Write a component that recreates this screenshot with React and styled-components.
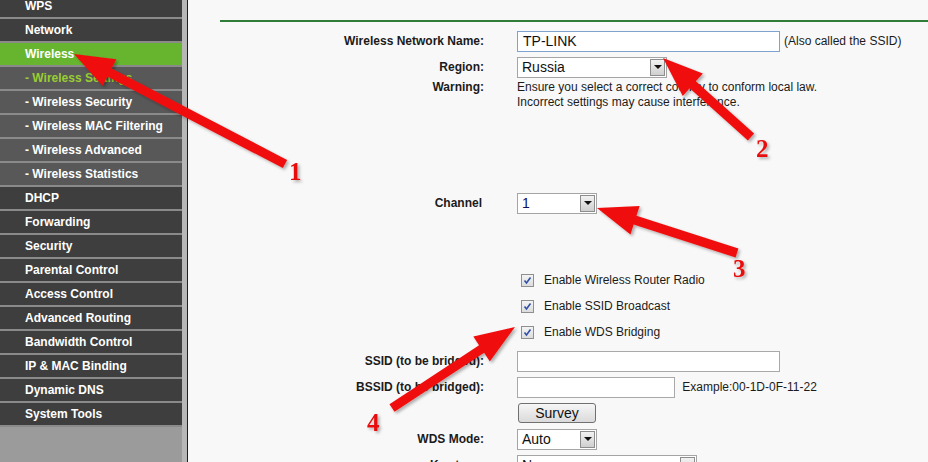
import React from 'react';
import styled, { createGlobalStyle } from 'styled-components';

const GlobalStyle = createGlobalStyle`
  html, body {
    margin: 0;
    padding: 0;
    width: 928px;
    height: 462px;
    overflow: hidden;
    background: #f8f8f8;
    font-family: 'Liberation Sans', Arial, sans-serif;
  }
`;

const Page = styled.div`
  position: relative;
  display: flex;
  width: 928px;
  height: 462px;
  overflow: hidden;
`;

const Sidebar = styled.nav`
  width: 182px;
  flex-shrink: 0;
  background: #9b9b9b;
  border-right: 5px solid #b7b7b7;
  box-shadow: 1px 0 0 #1e1e1e;
  margin-right: 2px;
`;

const NavList = styled.ul`
  list-style: none;
  margin: -5px 0 0;
  padding: 0;
`;

const NavItem = styled.li`
  height: 22px;
  line-height: 22px;
  border-bottom: 2px solid #8a8a8a;
  padding-left: 25px;
  font-size: 12px;
  font-weight: bold;
  color: ${(p) => (p.$current ? '#9acd32' : '#ffffff')};
  background: ${(p) => (p.$active ? '#67b52f' : p.$sub ? '#585858' : '#3e3e3e')};
  white-space: nowrap;
`;

const Content = styled.main`
  flex: 1;
  padding: 20px 0 0 31px;
  background: #f8f8f8;
`;

const Rule = styled.div`
  height: 0;
  border-top: 2px solid #2f7d38;
  margin-bottom: 6px;
`;

const Form = styled.div`
  display: grid;
  grid-template-columns: 264px 1fr;
  column-gap: 33px;
`;

const Label = styled.div`
  height: ${(p) => p.$h || 26}px;
  display: flex;
  align-items: ${(p) => (p.$top ? 'flex-start' : 'center')};
  justify-content: flex-end;
  font-size: 12px;
  font-weight: bold;
  color: #1b1b1b;
  white-space: nowrap;
  padding-right: ${(p) => p.$pr || 0}px;
`;

const Value = styled.div`
  height: ${(p) => p.$h || 26}px;
  display: flex;
  align-items: ${(p) => (p.$top ? 'flex-start' : 'center')};
  gap: 4px;
  font-size: 12px;
  color: #1b1b1b;
  white-space: nowrap;
`;

const Spacer = styled.div`
  grid-column: 1 / span 2;
  height: ${(p) => p.$h}px;
`;

const TextInput = styled.div`
  box-sizing: border-box;
  width: ${(p) => p.$w}px;
  height: 21px;
  background: #ffffff;
  border: 1px solid ${(p) => (p.$focus ? '#7fa3cf' : '#a9a9a9')};
  padding-left: 5px;
  font-size: 14px;
  line-height: 19px;
  color: #111;
`;

const SelectBox = styled.div`
  box-sizing: border-box;
  width: ${(p) => p.$w}px;
  height: 21px;
  display: flex;
  background: #ffffff;
  border: 1px solid #a5a5a5;
  font-size: 14px;
  color: ${(p) => (p.$blue ? '#101060' : '#111')};
`;

const SelectText = styled.span`
  flex: 1;
  padding-left: 4px;
  line-height: 19px;
`;

const SelectArrow = styled.span`
  width: 15px;
  height: 17px;
  margin: 1px;
  box-sizing: border-box;
  border: 1px solid #8d8d8d;
  background: linear-gradient(#f2f2f2, #cfcfcf);
  display: flex;
  align-items: center;
  justify-content: center;
  &::after {
    content: '';
    border-left: 4px solid transparent;
    border-right: 4px solid transparent;
    border-top: 4px solid #111;
  }
`;

const Note = styled.div`
  font-size: 12px;
  line-height: 15px;
  color: #1b1b1b;
`;

const CheckRow = styled.label`
  display: flex;
  align-items: center;
  gap: 10px;
  padding-left: 4px;
  font-size: 12px;
  color: #1b1b1b;
`;

const CheckBox = styled.span`
  box-sizing: border-box;
  width: 13px;
  height: 13px;
  border: 1px solid #8e8f8f;
  background: linear-gradient(#f4f4f4, #dcdcdc);
  display: flex;
  align-items: center;
  justify-content: center;
`;

const Button = styled.button`
  width: 78px;
  height: 20px;
  margin-left: 1px;
  border: 1px solid #707070;
  border-radius: 3px;
  background: linear-gradient(#f6f6f6, #dadada);
  font-family: 'Liberation Sans', Arial, sans-serif;
  font-size: 14px;
  color: #111;
  padding: 0;
`;

const Overlay = styled.svg`
  position: absolute;
  left: 0;
  top: 0;
  width: 928px;
  height: 462px;
  pointer-events: none;
  overflow: visible;
`;

const Num = styled.text`
  font-family: 'Liberation Serif', 'Times New Roman', serif;
  font-weight: bold;
  font-size: 25px;
  fill: #e8100f;
`;

const menu = [
  { t: 'WPS' },
  { t: 'Network' },
  { t: 'Wireless', active: true },
  { t: '- Wireless Settings', sub: true, current: true },
  { t: '- Wireless Security', sub: true },
  { t: '- Wireless MAC Filtering', sub: true },
  { t: '- Wireless Advanced', sub: true },
  { t: '- Wireless Statistics', sub: true },
  { t: 'DHCP' },
  { t: 'Forwarding' },
  { t: 'Security' },
  { t: 'Parental Control' },
  { t: 'Access Control' },
  { t: 'Advanced Routing' },
  { t: 'Bandwidth Control' },
  { t: 'IP & MAC Binding' },
  { t: 'Dynamic DNS' },
  { t: 'System Tools' },
];

const arrows = [
  { tail: [285, 164], tip: [74, 54], n: '1', at: [289, 180] },
  { tail: [751, 137], tip: [663, 58], n: '2', at: [756, 157] },
  { tail: [737, 253], tip: [597, 208], n: '3', at: [733, 277] },
  { tail: [392, 408], tip: [515, 327], n: '4', at: [367, 431] },
];

const arrowPoints = (tail, tip) => {
  const dx = tip[0] - tail[0];
  const dy = tip[1] - tail[1];
  const len = Math.hypot(dx, dy);
  const ux = dx / len;
  const uy = dy / len;
  const nx = -uy;
  const ny = ux;
  const headL = 40;
  const headW = 15;
  const shaftW = 4.6;
  const bx = tip[0] - ux * headL;
  const by = tip[1] - uy * headL;
  const pts = [
    [tail[0] + nx * shaftW, tail[1] + ny * shaftW],
    [bx + nx * shaftW, by + ny * shaftW],
    [bx + nx * headW, by + ny * headW],
    tip,
    [bx - nx * headW, by - ny * headW],
    [bx - nx * shaftW, by - ny * shaftW],
    [tail[0] - nx * shaftW, tail[1] - ny * shaftW],
  ];
  return pts.map((p) => p.join(',')).join(' ');
};

const Check = () => (
  <CheckBox>
    <svg width="9" height="9" viewBox="0 0 9 9">
      <path d="M1.5 4.5 L3.5 7 L7.5 1.5" fill="none" stroke="#2f4fa8" strokeWidth="1.6" />
    </svg>
  </CheckBox>
);

const Select = ({ w, children, blue }) => (
  <SelectBox $w={w} $blue={blue}>
    <SelectText>{children}</SelectText>
    <SelectArrow />
  </SelectBox>
);

const App = () => {
  return (
    <>
      <GlobalStyle />
      <Page>
        <Sidebar>
          <NavList>
            {menu.map((m) => (
              <NavItem key={m.t} $active={m.active} $sub={m.sub} $current={m.current}>
                {m.t}
              </NavItem>
            ))}
          </NavList>
        </Sidebar>
        <Content>
          <Rule />
          <Form>
            <Label>Wireless Network Name:</Label>
            <Value>
              <TextInput $w={263} $focus>TP-LINK</TextInput>
              <span>(Also called the SSID)</span>
            </Value>

            <Label>Region:</Label>
            <Value>
              <Select w={150}>Russia</Select>
            </Value>

            <Label $h={30} $top>Warning:</Label>
            <Value $h={30} $top>
              <Note>
                Ensure you select a correct country to conform local law.
                <br />
                Incorrect settings may cause interference.
              </Note>
            </Value>

            <Spacer $h={80} />

            <Label $pr={2}>Channel</Label>
            <Value>
              <Select w={80} blue>1</Select>
            </Value>

            <Spacer $h={51} />

            <Label />
            <Value>
              <CheckRow>
                <Check />
                Enable Wireless Router Radio
              </CheckRow>
            </Value>
            <Label />
            <Value>
              <CheckRow>
                <Check />
                Enable SSID Broadcast
              </CheckRow>
            </Value>
            <Label />
            <Value>
              <CheckRow>
                <Check />
                Enable WDS Bridging
              </CheckRow>
            </Value>

            <Spacer $h={3} />

            <Label>SSID (to be bridged):</Label>
            <Value>
              <TextInput $w={263} />
            </Value>

            <Label>BSSID (to be bridged):</Label>
            <Value>
              <TextInput $w={158} />
              <span>&nbsp;Example:00-1D-0F-11-22</span>
            </Value>

            <Label />
            <Value>
              <Button>Survey</Button>
            </Value>

            <Label>WDS Mode:</Label>
            <Value>
              <Select w={80}>Auto</Select>
            </Value>

            <Label>Key type:</Label>
            <Value>
              <Select w={180}>None</Select>
            </Value>
          </Form>
        </Content>

        <Overlay viewBox="0 0 928 462">
          <defs>
            <filter id="shade" x="-20%" y="-20%" width="140%" height="140%">
              <feDropShadow dx="2" dy="2" stdDeviation="1.5" floodColor="#000" floodOpacity="0.3" />
            </filter>
          </defs>
          {arrows.map((a) => (
            <g key={a.n} filter="url(#shade)">
              <polygon points={arrowPoints(a.tail, a.tip)} fill="#f0100e" />
              <Num x={a.at[0]} y={a.at[1]}>{a.n}</Num>
            </g>
          ))}
        </Overlay>
      </Page>
    </>
  );
};

export default App;
